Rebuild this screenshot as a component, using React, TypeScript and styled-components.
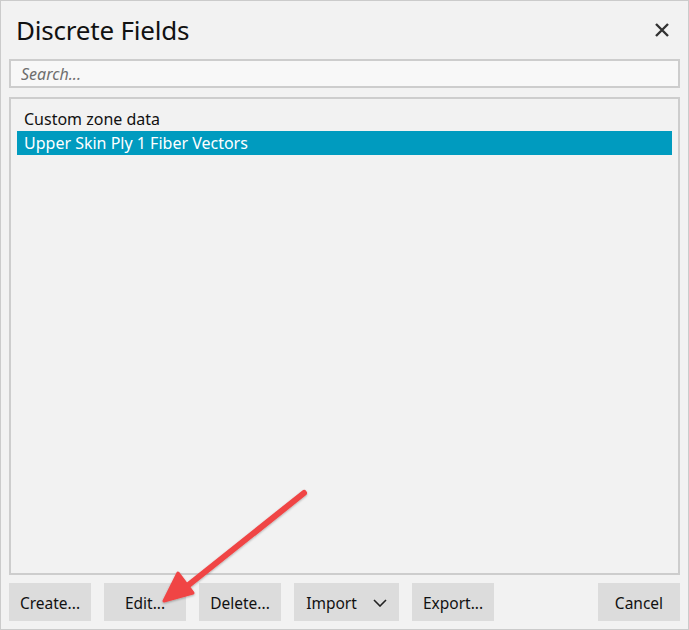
import React from "react";
import styled, { createGlobalStyle } from "styled-components";

const GlobalStyle = createGlobalStyle`
  html, body {
    margin: 0;
    padding: 0;
    background: #ffffff;
  }
  * {
    box-sizing: border-box;
  }
`;

const Dialog = styled.div`
  position: relative;
  width: 689px;
  height: 630px;
  border: 1px solid #cbcbcb;
  background: #f2f2f2;
  padding: 0 8px 8px 8px;
  display: flex;
  flex-direction: column;
  font-family: "Noto Sans", "Open Sans", sans-serif;
  color: #1a1a1a;
`;

const Header = styled.div`
  height: 58px;
  display: flex;
  align-items: center;
  justify-content: space-between;
  padding: 0 10px 0 7px;
`;

const Title = styled.h1`
  margin: 0;
  font-size: 26px;
  font-weight: 400;
  color: #111;
  letter-spacing: -0.2px;
`;

const CloseButton = styled.button`
  border: none;
  background: transparent;
  padding: 0;
  width: 16px;
  height: 16px;
  display: flex;
  cursor: pointer;
`;

const SearchInput = styled.input`
  height: 29px;
  width: 100%;
  border: 2px solid #cdcdcd;
  background: #f8f8f8;
  padding: 0 10px;
  font-family: inherit;
  font-size: 16px;
  outline: none;
  &::placeholder {
    color: #6e6e6e;
    font-style: italic;
  }
`;

const ListBox = styled.div`
  margin-top: 9px;
  flex: 1;
  border: 2px solid #cdcdcd;
  background: #f2f2f2;
  padding: 8px 6px;
`;

const ListItem = styled.div<{ selected?: boolean }>`
  height: 24px;
  line-height: 24px;
  padding: 0 7px;
  font-size: 16px;
  color: ${({ selected }) => (selected ? "#ffffff" : "#111")};
  background: ${({ selected }) => (selected ? "#009bbf" : "transparent")};
`;

const ButtonRow = styled.div`
  margin-top: 8px;
  display: flex;
  gap: 13px;
`;

const Button = styled.button<{ wide?: boolean }>`
  height: 38px;
  width: ${({ wide }) => (wide ? "105px" : "82px")};
  flex-shrink: 0;
  border: none;
  background: #dcdcdc;
  font-family: inherit;
  font-size: 15.5px;
  color: #111;
  display: flex;
  align-items: center;
  justify-content: center;
  gap: 16px;
  padding: 2px 0 0 0;
`;

const Spacer = styled.div`
  flex: 1;
`;

const Arrow = styled.svg`
  position: absolute;
  left: 150px;
  top: 480px;
  overflow: visible;
  pointer-events: none;
`;

const items = [
  { name: "Custom zone data", selected: false },
  { name: "Upper Skin Ply 1 Fiber Vectors", selected: true },
];

export default function App() {
  return (
    <>
      <GlobalStyle />
      <Dialog>
        <Header>
          <Title>Discrete Fields</Title>
          <CloseButton aria-label="Close">
            <svg width="16" height="16" viewBox="0 0 16 16">
              <path d="M2 2 L14 14 M14 2 L2 14" stroke="#333" strokeWidth="2.4" />
            </svg>
          </CloseButton>
        </Header>
        <SearchInput placeholder="Search..." />
        <ListBox>
          {items.map((it) => (
            <ListItem key={it.name} selected={it.selected}>
              {it.name}
            </ListItem>
          ))}
        </ListBox>
        <ButtonRow>
          <Button>Create...</Button>
          <Button>Edit...</Button>
          <Button>Delete...</Button>
          <Button wide>
            Import
            <svg width="14" height="8" viewBox="0 0 14 8">
              <path d="M1 1 L7 7 L13 1" fill="none" stroke="#222" strokeWidth="1.6" />
            </svg>
          </Button>
          <Button>Export...</Button>
          <Spacer />
          <Button>Cancel</Button>
        </ButtonRow>
        <Arrow width="180" height="130">
          <defs>
            <filter id="arrowShadow" x="-20%" y="-20%" width="140%" height="140%">
              <feDropShadow dx="0" dy="1" stdDeviation="1.2" floodColor="#000" floodOpacity="0.3" />
            </filter>
          </defs>
          <g filter="url(#arrowShadow)">
            <line x1="153" y1="12" x2="35" y2="106" stroke="#f04545" strokeWidth="6" strokeLinecap="round" />
            <path d="M13 120 L27 92 L42 112 Z" fill="#f04545" stroke="#f04545" strokeWidth="3" strokeLinejoin="round" />
          </g>
        </Arrow>
      </Dialog>
    </>
  );
}
